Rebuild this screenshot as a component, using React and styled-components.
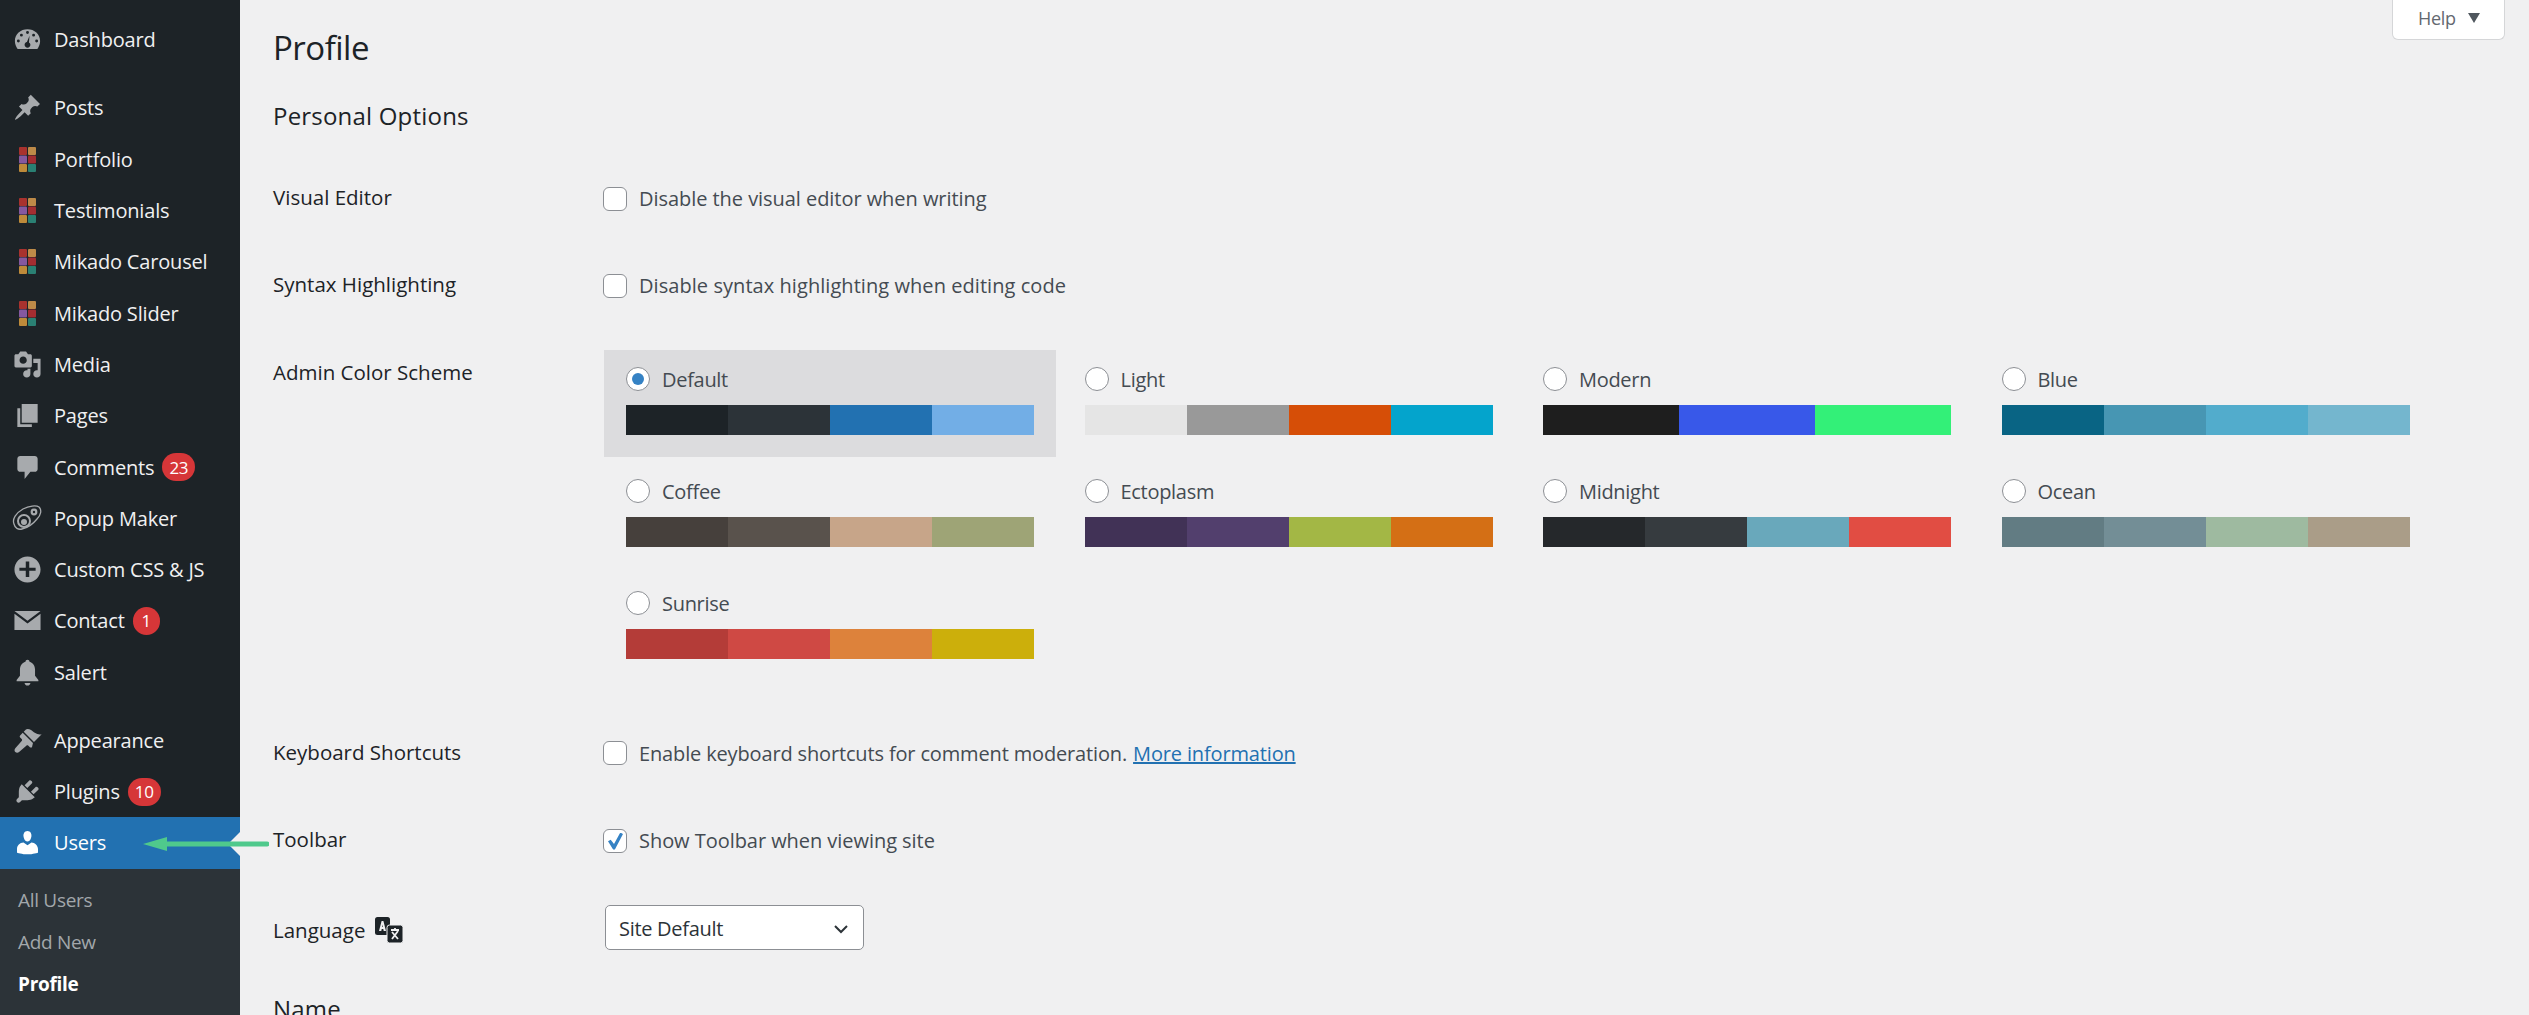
import React from "react"
import styled, { createGlobalStyle } from "styled-components"

const GlobalStyle = createGlobalStyle`
  html, body {
    margin: 0;
    padding: 0;
    background: #f0f0f1;
  }
  body {
    font-family: "Open Sans", "Noto Sans", sans-serif;
    color: #1d2327;
  }
`

const Page = styled.div`
  position: relative;
  display: flex;
  width: 2529px;
  height: 1015px;
  overflow: hidden;
  background: #f0f0f1;
`

const Sidebar = styled.nav`
  flex: 0 0 240px;
  position: relative;
  z-index: 2;
  height: 100%;
  padding-top: 14px;
  box-sizing: border-box;
  background: #1d2327;
`

const MenuGroup = styled.div`
  margin-bottom: 17px;
`

const MenuRow = styled.div`
  position: relative;
  display: flex;
  align-items: center;
  height: ${(p) => p.$height || "51.3px"};
  padding-bottom: ${(p) => (p.$current ? "2px" : "0")};
  box-sizing: border-box;
  color: ${(p) => (p.$current ? "#fff" : "#f0f0f1")};
  background: ${(p) => (p.$current ? "#2271b1" : "transparent")};
  font-size: 20px;
  letter-spacing: -0.18px;
`

const IconSlot = styled.span`
  flex: 0 0 54px;
  display: flex;
  align-items: center;
  justify-content: center;
  color: ${(p) => (p.$current ? "#fff" : "#a7aaad")};
`

const Badge = styled.span`
  display: inline-flex;
  align-items: center;
  justify-content: center;
  min-width: 27px;
  height: 28px;
  margin-left: 8px;
  padding: 0 7px;
  box-sizing: border-box;
  border-radius: 14px;
  background: #d63638;
  color: #fff;
  font-size: 17px;
  letter-spacing: -0.3px;
`

const Notch = styled.span`
  position: absolute;
  right: 0;
  top: 15px;
  border: 12px solid transparent;
  border-right-color: #f0f0f1;
  border-left-width: 0;
`

const GreenArrow = styled.svg`
  position: absolute;
  left: 142px;
  top: 20px;
  z-index: 3;
`

const SubMenu = styled.div`
  padding-top: 10px;
  background: #2c3338;
  height: 200px;
`

const SubItem = styled.div`
  display: flex;
  align-items: center;
  height: 42px;
  padding-left: 18px;
  font-size: 19px;
  letter-spacing: -0.3px;
  font-weight: ${(p) => (p.$current ? 700 : 400)};
  color: ${(p) => (p.$current ? "#fff" : "#a2a7ab")};
`

const Main = styled.main`
  flex: 1;
  padding: 24px 0 0 33px;
`

const HelpTab = styled.div`
  position: absolute;
  top: 0;
  right: 24px;
  display: flex;
  align-items: center;
  gap: 12px;
  width: 113px;
  height: 40px;
  padding: 0 0 3px 25px;
  box-sizing: border-box;
  border: 1px solid #d5d6d8;
  border-top: 0;
  border-radius: 0 0 6px 6px;
  background: #fff;
  color: #646970;
  font-size: 18px;
  letter-spacing: -0.3px;
`

const HelpCaret = styled.span`
  width: 0;
  height: 0;
  border: 6px solid transparent;
  border-top: 10px solid #50575e;
  border-bottom: 0;
`

const Title = styled.h1`
  margin: 0;
  font-size: 33px;
  line-height: 48px;
  font-weight: 400;
  letter-spacing: -0.5px;
  color: #1d2327;
`

const SectionTitle = styled.h2`
  margin: ${(p) => p.$top || "24px"} 0 ${(p) => p.$bottom || "0"};
  font-size: 24px;
  line-height: 40px;
  font-weight: 500;
  letter-spacing: 0.2px;
  color: #1d2327;
`

const FormRow = styled.div`
  display: grid;
  grid-template-columns: 331px 1fr;
  align-items: center;
  height: 87.3px;
`

const FieldLabel = styled.div`
  display: flex;
  align-items: center;
  gap: 9px;
  margin-top: ${(p) => p.$top || "-3px"};
  font-size: 20.5px;
  line-height: 30px;
  font-weight: 500;
  letter-spacing: 0;
  color: #1d2327;
`

const Check = styled.label`
  display: flex;
  align-items: center;
  gap: 12px;
  margin-left: -1px;
  font-size: 20px;
  letter-spacing: ${(p) => p.$tracking || "-0.05px"};
  color: #444b52;
`

const CheckBox = styled.input.attrs({ type: "checkbox", readOnly: true })`
  appearance: none;
  position: relative;
  flex: none;
  width: 24px;
  height: 24px;
  margin: 0;
  border: 1px solid #8c8f94;
  border-radius: 6px;
  background: #fff;
  &:checked::before {
    content: "";
    position: absolute;
    left: 4px;
    top: 3px;
    width: 15px;
    height: 17px;
    background: #3582c4;
    clip-path: polygon(0 52%, 18% 42%, 40% 68%, 82% 0, 100% 8%, 46% 100%, 34% 100%);
  }
`

const ColorRow = styled.div`
  display: grid;
  grid-template-columns: 331px 1fr;
  align-items: start;
  height: 380px;
  padding-top: 20px;
  box-sizing: border-box;
`

const SchemeGrid = styled.div`
  display: grid;
  grid-template-columns: repeat(4, 452px);
  column-gap: 6.5px;
  row-gap: 5px;
`

const SchemeOption = styled.label`
  display: block;
  height: 107px;
  padding: 17px 22px 0;
  box-sizing: border-box;
  background: ${(p) => (p.$selected ? "#dcdcde" : "transparent")};
`

const SchemeName = styled.div`
  display: flex;
  align-items: center;
  gap: 12px;
  height: 24px;
  font-size: 20px;
  line-height: 26px;
  letter-spacing: -0.3px;
  color: #444b52;
`

const SchemeText = styled.span`
  padding-top: 2px;
`

const Radio = styled.input.attrs({ type: "radio", readOnly: true })`
  appearance: none;
  position: relative;
  flex: none;
  width: 24px;
  height: 24px;
  margin: 0;
  border: 1px solid #8c8f94;
  border-radius: 50%;
  background: #fff;
  &:checked::before {
    content: "";
    position: absolute;
    left: 5px;
    top: 5px;
    width: 12px;
    height: 12px;
    border-radius: 50%;
    background: #3582c4;
  }
`

const Palette = styled.div`
  display: flex;
  height: 30px;
  margin-top: 14px;
`

const Swatch = styled.span`
  flex: 1;
  background: ${(p) => p.$color};
`

const DocLink = styled.a`
  margin-left: -6px;
  color: #2271b1;
  text-decoration: underline;
`

const LanguageSelect = styled.div`
  display: flex;
  align-items: center;
  justify-content: space-between;
  width: 259px;
  height: 45px;
  margin-left: 1px;
  padding: 2px 13px 0;
  box-sizing: border-box;
  border: 1px solid #8c8f94;
  border-radius: 5px;
  background: #fff;
  font-size: 20px;
  letter-spacing: -0.3px;
  color: #2c3338;
`

const Svg = ({ size = 29, viewBox = "0 0 20 20", children }) => (
  <svg width={size} height={size} viewBox={viewBox} fill="currentColor" fillRule="evenodd">
    {children}
  </svg>
)

const icons = {
  dashboard: (
    <Svg>
      <path d="M3.2 16.5h13.6c1.1-1.4 1.9-3.3 1.9-5.4C18.7 6.3 14.8 3 10 3s-8.7 3.3-8.7 8.1c0 2.1.8 4 1.9 5.4zM10 4.2a1 1 0 1 1 0 2 1 1 0 0 1 0-2zM5.8 6a1 1 0 1 1 0 2 1 1 0 0 1 0-2zm8.4 0a1 1 0 1 1 0 2 1 1 0 0 1 0-2zM3.7 10a1 1 0 1 1 0 2 1 1 0 0 1 0-2zm12.6 0a1 1 0 1 1 0 2 1 1 0 0 1 0-2zM11.4 7.4l-.4 4.6c.7.4 1 1 1 1.7 0 1.1-.9 2-2 2s-2-.9-2-2c0-1 .7-1.8 1.6-2z" />
    </Svg>
  ),
  pin: (
    <Svg>
      <path d="M10.44 3.02l1.82-1.82 6.36 6.35-1.83 1.82c-1.05-.68-2.48-.57-3.41.36l-.75.75c-.92.93-1.04 2.35-.35 3.41l-1.83 1.82-2.41-2.41-2.8 2.79c-.42.42-3.38 2.71-3.8 2.29s1.86-3.39 2.28-3.81l2.79-2.79L4.1 9.36l1.83-1.82c1.05.69 2.48.57 3.4-.36l.75-.75c.93-.92 1.05-2.35.36-3.41z" />
    </Svg>
  ),
  tiles: (
    <svg width="17" height="25" viewBox="0 0 17 25">
      <rect x="0" y="0" width="8" height="8" rx="1" fill="#a8322e" />
      <rect x="9" y="0" width="8" height="8" rx="1" fill="#bd8a48" />
      <rect x="0" y="8.5" width="8" height="8" rx="1" fill="#85589f" />
      <rect x="9" y="8.5" width="8" height="8" rx="1" fill="#a32d31" />
      <rect x="0" y="17" width="8" height="8" rx="1" fill="#bd8a3a" />
      <rect x="9" y="17" width="8" height="8" rx="1" fill="#2a8073" />
    </svg>
  ),
  media: (
    <Svg>
      <path d="M13 11V4c0-.55-.45-1-1-1h-1.67L9 1H5L3.67 3H2c-.55 0-1 .45-1 1v7c0 .55.45 1 1 1h10c.55 0 1-.45 1-1zM7 4.5c1.38 0 2.5 1.12 2.5 2.5S8.38 9.5 7 9.5 4.5 8.38 4.5 7 5.62 4.5 7 4.5zM14 6h5v10.5c0 1.38-1.12 2.5-2.5 2.5S14 17.88 14 16.5s1.12-2.5 2.5-2.5c.17 0 .34.02.5.05V9h-3V6zm-4 8.05V13h2v3.5c0 1.38-1.12 2.5-2.5 2.5S7 17.88 7 16.5 8.12 14 9.5 14c.17 0 .34.02.5.05z" />
    </Svg>
  ),
  pages: (
    <Svg>
      <path d="M6 15V2h11v13H6zm-1 1h8v2H3V5h2v11z" />
    </Svg>
  ),
  comments: (
    <Svg>
      <path d="M5 2h10c1.1 0 2 .9 2 2v7c0 1.1-.9 2-2 2h-3l-4 5v-5H5c-1.1 0-2-.9-2-2V4c0-1.1.9-2 2-2z" />
    </Svg>
  ),
  popup: (
    <svg width="31" height="28" viewBox="0 0 31 28" fill="none" stroke="currentColor" strokeWidth="1.3">
      <path d="M2 20c-2-5 2-11 9-15 6-3 13-4 16-2 3 3 2 8-2 12-4 5-10 9-15 10-4 1-7-1-8-5z" />
      <circle cx="12" cy="17" r="6" strokeWidth="2" />
      <circle cx="12" cy="18" r="3" fill="currentColor" stroke="none" />
      <circle cx="22" cy="8" r="3.4" fill="currentColor" stroke="none" />
      <circle cx="22" cy="8" r="1.2" fill="#1d2327" stroke="none" />
    </svg>
  ),
  plus: (
    <Svg>
      <path d="M10 1c-5 0-9 4-9 9s4 9 9 9 9-4 9-9-4-9-9-9zm1.2 9.8v4.400H8.800v-4.400H4.400V8.800h4.400V4.400h2.400v4.400h4.400v2z" />
    </Svg>
  ),
  mail: (
    <Svg>
      <path d="M1 3.500h18L10 10.200zM1 5.400l9 6.600 9-6.600V16.500H1z" />
    </Svg>
  ),
  bell: (
    <Svg>
      <path d="M10 1.200c.8 0 1.400.6 1.400 1.300 2.500.7 3.800 2.900 3.800 5.500v4.300l2.300 2.900v.8H2.500v-.8l2.300-2.900V8c0-2.600 1.300-4.800 3.800-5.500 0-.7.6-1.300 1.400-1.300zM8 17.200h4c0 1-.9 1.800-2 1.800s-2-.8-2-1.800z" />
    </Svg>
  ),
  brush: (
    <Svg>
      <path d="M14.480 11.060L7.410 3.990l1.500-1.500c.5-.56 2.300-.47 3.510.32 1.210.8 1.430 1.280 2.910 2.100 1.180.64 2.450 1.260 4.450.85zM13.770 11.770L6.700 4.700 4.930 6.470c-.39.39-.39 1.020 0 1.410l1.060 1.060c.39.39.39 1.030 0 1.420l-4.400 5c-.7.800-.7 1.900 0 2.600s1.800.7 2.600 0l5-4.400c.39-.39 1.030-.39 1.420 0l1.060 1.060c.39.39 1.020.39 1.410 0z" />
    </Svg>
  ),
  plugin: (
    <Svg>
      <path d="M13.110 4.360L9.870 7.600 8 5.730l3.240-3.240c.35-.34 1.050-.2 1.560.32.52.51.66 1.210.31 1.550zm-8 1.770l.91-1.120 9.010 9.010-1.190.84c-.71.71-2.630 1.160-3.820 1.160H6.140L4.900 17.260c-.59.59-1.540.59-2.120 0-.59-.58-.59-1.530 0-2.120l1.240-1.240v-3.880c0-1.130.4-3.190 1.090-3.890zm7.260 3.970l3.240-3.240c.34-.35 1.040-.21 1.550.31.520.51.660 1.210.310 1.550l-3.240 3.250z" />
    </Svg>
  ),
  user: (
    <Svg>
      <path d="M10 9.250c-2.270 0-2.730-3.440-2.730-3.440C7 4.020 7.820 2 9.970 2c2.160 0 2.980 2.020 2.710 3.810 0 0-.41 3.440-2.680 3.440zm0 2.570L12.720 10c2.390 0 4.520 2.330 4.520 4.530v2.490s-3.650 1.130-7.240 1.130c-3.650 0-7.240-1.130-7.240-1.130v-2.490c0-2.250 1.940-4.480 4.470-4.480z" />
    </Svg>
  ),
}

const TranslationIcon = () => (
  <svg width="30" height="26" viewBox="0 0 30 26">
    <rect x="1" y="0" width="15" height="18" rx="2.500" fill="#1d2327" />
    <path d="M5 14l2.600-10h1.800L12 14h-2.300l-.4-2H7.700l-.4 2zM8.100 10h.8l-.4-2.400z" fill="#f0f0f1" />
    <rect x="13" y="8" width="16" height="18" rx="2.500" fill="#1d2327" stroke="#f0f0f1" strokeWidth="1" />
    <path d="M17 13h8M21 11v2M18 22l6-8M18 15l6 7" stroke="#f0f0f1" strokeWidth="1.800" fill="none" />
  </svg>
)

const topMenu = [{ icon: "dashboard", label: "Dashboard" }]

const middleMenu = [
  { icon: "pin", label: "Posts" },
  { icon: "tiles", label: "Portfolio" },
  { icon: "tiles", label: "Testimonials" },
  { icon: "tiles", label: "Mikado Carousel" },
  { icon: "tiles", label: "Mikado Slider" },
  { icon: "media", label: "Media" },
  { icon: "pages", label: "Pages" },
  { icon: "comments", label: "Comments", badge: "23" },
  { icon: "popup", label: "Popup Maker" },
  { icon: "plus", label: "Custom CSS & JS" },
  { icon: "mail", label: "Contact", badge: "1" },
  { icon: "bell", label: "Salert" },
]

const lowerMenu = [
  { icon: "brush", label: "Appearance" },
  { icon: "plugin", label: "Plugins", badge: "10" },
]

const schemes = [
  { name: "Default", colors: ["#1d2327", "#2c3338", "#2271b1", "#72aee6"], selected: true },
  { name: "Light", colors: ["#e5e5e5", "#999999", "#d64e07", "#04a4cc"] },
  { name: "Modern", colors: ["#1e1e1e", "#3858e9", "#33f078"] },
  { name: "Blue", colors: ["#096484", "#4796b3", "#52accc", "#74b6ce"] },
  { name: "Coffee", colors: ["#46403c", "#59524c", "#c7a589", "#9ea476"] },
  { name: "Ectoplasm", colors: ["#413256", "#523f6d", "#a3b745", "#d46f15"] },
  { name: "Midnight", colors: ["#25282b", "#363b3f", "#69a8bb", "#e14d43"] },
  { name: "Ocean", colors: ["#627c83", "#738e96", "#9ebaa0", "#aa9d88"] },
  { name: "Sunrise", colors: ["#b43c38", "#cf4944", "#dd823b", "#ccaf0b"] },
]

const MenuItem = ({ item }) => (
  <MenuRow>
    <IconSlot>{icons[item.icon]}</IconSlot>
    {item.label}
    {item.badge && <Badge>{item.badge}</Badge>}
  </MenuRow>
)

const App = () => {
  return (
    <Page>
      <GlobalStyle />
      <Sidebar>
        <MenuGroup>
          {topMenu.map((item) => (
            <MenuItem key={item.label} item={item} />
          ))}
        </MenuGroup>
        <MenuGroup>
          {middleMenu.map((item) => (
            <MenuItem key={item.label} item={item} />
          ))}
        </MenuGroup>
        {lowerMenu.map((item) => (
          <MenuItem key={item.label} item={item} />
        ))}
        <MenuRow $current $height="52px">
          <IconSlot $current>{icons.user}</IconSlot>
          Users
          <Notch />
          <GreenArrow width="127" height="14" viewBox="0 0 127 14">
            <path d="M1 7l24-7v4.500h100a2.500 2.500 0 0 1 0 5H25V14z" fill="#4fc98c" />
          </GreenArrow>
        </MenuRow>
        <SubMenu>
          <SubItem>All Users</SubItem>
          <SubItem>Add New</SubItem>
          <SubItem $current>Profile</SubItem>
        </SubMenu>
      </Sidebar>

      <Main>
        <HelpTab>
          Help
          <HelpCaret />
        </HelpTab>
        <Title>Profile</Title>
        <SectionTitle $bottom="19px">Personal Options</SectionTitle>

        <FormRow>
          <FieldLabel>Visual Editor</FieldLabel>
          <Check>
            <CheckBox />
            Disable the visual editor when writing
          </Check>
        </FormRow>
        <FormRow>
          <FieldLabel>Syntax Highlighting</FieldLabel>
          <Check $tracking="0.06px">
            <CheckBox />
            Disable syntax highlighting when editing code
          </Check>
        </FormRow>

        <ColorRow>
          <FieldLabel $top="7px">Admin Color Scheme</FieldLabel>
          <SchemeGrid>
            {schemes.map((scheme) => (
              <SchemeOption key={scheme.name} $selected={scheme.selected}>
                <SchemeName>
                  <Radio checked={!!scheme.selected} />
                  <SchemeText>{scheme.name}</SchemeText>
                </SchemeName>
                <Palette>
                  {scheme.colors.map((color) => (
                    <Swatch key={color} $color={color} />
                  ))}
                </Palette>
              </SchemeOption>
            ))}
          </SchemeGrid>
        </ColorRow>

        <FormRow>
          <FieldLabel>Keyboard Shortcuts</FieldLabel>
          <Check $tracking="-0.15px">
            <CheckBox />
            Enable keyboard shortcuts for comment moderation.
            <DocLink href="#">More information</DocLink>
          </Check>
        </FormRow>
        <FormRow>
          <FieldLabel>Toolbar</FieldLabel>
          <Check>
            <CheckBox checked />
            Show Toolbar when viewing site
          </Check>
        </FormRow>
        <FormRow>
          <FieldLabel $top="4px">
            Language
            <TranslationIcon />
          </FieldLabel>
          <LanguageSelect>
            Site Default
            <svg width="18" height="18" viewBox="0 0 18 18" fill="none" stroke="#2c3338" strokeWidth="2">
              <path d="M3 6l6 6 6-6" />
            </svg>
          </LanguageSelect>
        </FormRow>

        <SectionTitle $top="18px">Name</SectionTitle>
      </Main>
    </Page>
  )
}

export default App
